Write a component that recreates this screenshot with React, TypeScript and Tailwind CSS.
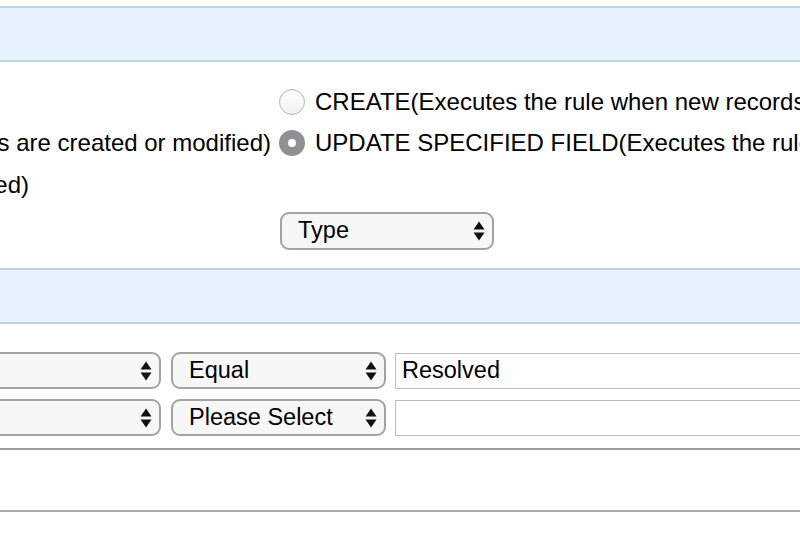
import React from "react";

function Arrows() {
  return (
    <svg width="12" height="24" viewBox="0 0 12 24" className="shrink-0">
      <path d="M6 2.5 L11.5 10.5 L0.5 10.5 Z" fill="#111" />
      <path d="M0.5 13.5 L11.5 13.5 L6 21.5 Z" fill="#111" />
    </svg>
  );
}

function FakeSelect({ label, className }: { label: string; className: string }) {
  return (
    <div
      className={
        "flex shrink-0 items-center justify-between rounded-[9px] border-2 border-[#a3a3a3] bg-[#f7f7f7] pl-[16px] pr-[7px] text-[23.5px] text-black " +
        className
      }
    >
      <span className="whitespace-nowrap">{label}</span>
      <Arrows />
    </div>
  );
}

function Radio({ checked }: { checked?: boolean }) {
  if (checked) {
    return (
      <div className="flex h-[26px] w-[26px] shrink-0 items-center justify-center rounded-full bg-[#8f8f94]">
        <div className="h-[8px] w-[8px] rounded-full bg-white" />
      </div>
    );
  }
  return (
    <div className="h-[26px] w-[26px] shrink-0 rounded-full border border-[#b5b5b5] bg-gradient-to-b from-white to-[#f2f2f2] shadow-[inset_0_1px_1px_rgba(0,0,0,0.05)]" />
  );
}

export default function App() {
  return (
    <div
      className="h-[550px] w-[800px] overflow-hidden bg-white text-black"
      style={{ fontFamily: '"Liberation Sans", Arial, sans-serif' }}
    >
      <div className="mt-[6px] h-[56px] border-y-2 border-[#bcd3e3] bg-[#e6f3fc]" />

      <div className="mt-[27px] flex h-[26px] items-center">
        <div className="w-[279px] shrink-0" />
        <Radio />
        <span className="ml-[10px] whitespace-nowrap text-[24px]">
          CREATE(Executes the rule when new records are created)
        </span>
      </div>

      <div className="mt-[15px] flex h-[26px] items-center">
        <div className="flex w-[271px] shrink-0 justify-end overflow-hidden whitespace-nowrap text-[24px]">
          UPDATE(Executes the rule when records are created or modified)
        </div>
        <div className="w-[8px] shrink-0" />
        <Radio checked />
        <span className="ml-[10px] whitespace-nowrap text-[24px]">
          UPDATE SPECIFIED FIELD(Executes the rule when specified field is updated)
        </span>
      </div>

      <div className="mt-[16px] flex h-[26px] items-center">
        <div className="flex w-[29px] shrink-0 justify-end overflow-hidden whitespace-nowrap text-[24px]">
          updated)
        </div>
      </div>

      <div className="mt-[14px] flex">
        <div className="w-[280px] shrink-0" />
        <FakeSelect label="Type" className="h-[38px] w-[214px]" />
      </div>

      <div className="mt-[18px] h-[56px] border-y-2 border-[#bcd3e3] bg-[#e6f3fc]" />

      <div className="mt-[28px] flex flex-col gap-[10px]">
        <div className="flex items-center">
          <FakeSelect label="" className="-ml-[40px] h-[37px] w-[201px]" />
          <FakeSelect label="Equal" className="ml-[10px] h-[37px] w-[215px]" />
          <div className="ml-[9px] flex h-[36px] w-[440px] shrink-0 items-center border border-[#bdbdbd] pl-[6px] text-[23.5px]">
            Resolved
          </div>
        </div>
        <div className="flex items-center">
          <FakeSelect label="" className="-ml-[40px] h-[37px] w-[201px]" />
          <FakeSelect label="Please Select" className="ml-[10px] h-[37px] w-[215px]" />
          <div className="ml-[9px] flex h-[36px] w-[440px] shrink-0 items-center border border-[#bdbdbd] pl-[6px] text-[23.5px]" />
        </div>
      </div>

      <div className="mt-[12px] h-[2px] bg-[#9a9a9a]" />
      <div className="mt-[60px] h-[2px] bg-[#ababab]" />
    </div>
  );
}
